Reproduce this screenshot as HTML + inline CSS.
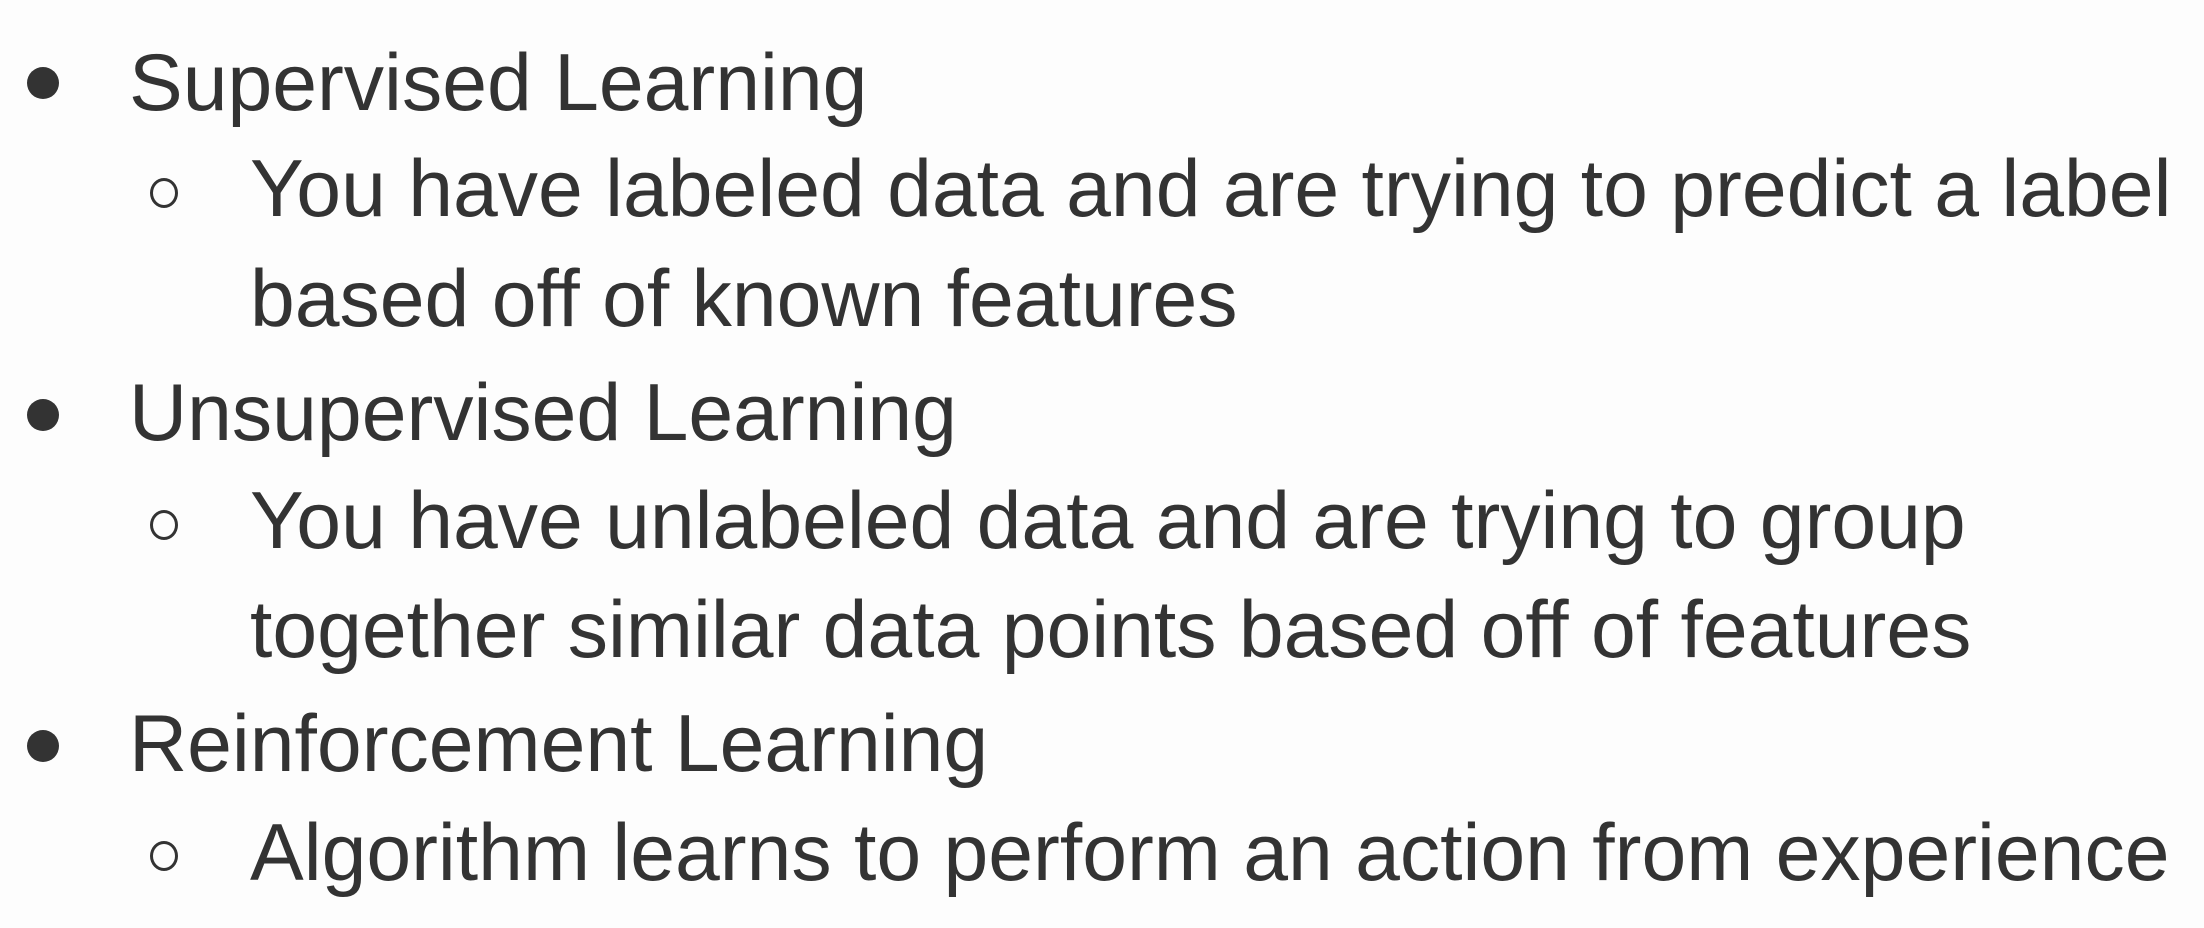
<!DOCTYPE html>
<html><head><meta charset="utf-8"><style>
html,body{margin:0;padding:0;background:#fdfdfd;}
body{width:2204px;height:928px;position:relative;overflow:hidden;font-family:"Liberation Sans",Arial,sans-serif;color:#333;}
.t{position:absolute;font-size:80.5px;line-height:81px;white-space:nowrap;}
.d{position:absolute;width:32px;height:32px;border-radius:50%;background:#333;}
.c{position:absolute;width:28px;height:30px;border-radius:50%;border:3px solid #333;box-sizing:border-box;}
</style></head><body>
<div class="d" style="left:27px;top:67px"></div>
<div class="t" style="left:129px;top:43px">Supervised Learning</div>
<div class="c" style="left:150px;top:178px"></div>
<div class="t" style="left:250px;top:149px">You have labeled data and are trying to predict a label</div>
<div class="t" style="left:250px;top:259px">based off of known features</div>
<div class="d" style="left:27px;top:399px"></div>
<div class="t" style="left:129px;top:373px">Unsupervised Learning</div>
<div class="c" style="left:150px;top:510px"></div>
<div class="t" style="left:250px;top:481px">You have unlabeled data and are trying to group</div>
<div class="t" style="left:250px;top:590px">together similar data points based off of features</div>
<div class="d" style="left:27px;top:730px"></div>
<div class="t" style="left:129px;top:704px">Reinforcement Learning</div>
<div class="c" style="left:150px;top:841px"></div>
<div class="t" style="left:250px;top:813px">Algorithm learns to perform an action from experience</div>
</body></html>
